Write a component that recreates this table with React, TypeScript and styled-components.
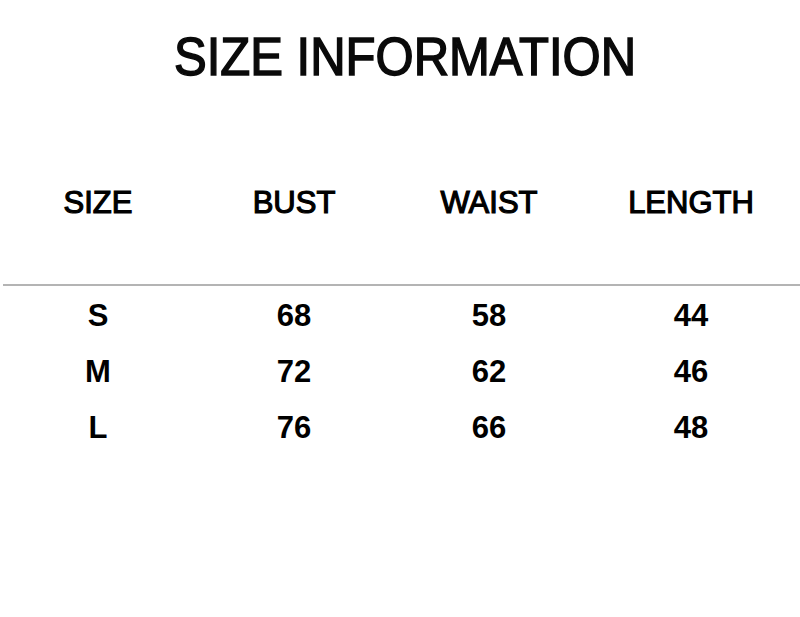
import styled, { createGlobalStyle } from 'styled-components'

const GlobalStyle = createGlobalStyle`
    html, body {
        margin: 0;
        padding: 0;
        background: #ffffff;
    }
    body {
        font-family: "Liberation Sans", Arial, sans-serif;
        color: #000000;
    }
`

const Page = styled.div`
    width: 800px;
    height: 617px;
    background: #ffffff;
    overflow: hidden;
`

const Title = styled.h1`
    margin: 0;
    padding-top: 29px;
    text-align: center;
    font-family: "Liberation Sans", Arial, sans-serif;
    font-size: 53px;
    font-weight: 400;
    line-height: 56px;
    color: #0a0a0a;
    -webkit-text-stroke: 1.5px #0a0a0a;
    transform: translateX(5px) scaleX(0.925);
`

const Spacer = styled.div<{ $h: number }>`
    height: ${p => p.$h}px;
`

const Row = styled.div<{ $height: number }>`
    display: grid;
    grid-template-columns: 196px 196px 194px 210px;
    height: ${p => p.$height}px;
    align-items: center;
`

const HeadCell = styled.div`
    text-align: center;
    font-family: "Liberation Sans", Arial, sans-serif;
    font-size: 31px;
    font-weight: 400;
    color: #000000;
    -webkit-text-stroke: 1.2px #000000;
`

const Divider = styled.hr`
    margin: 0 0 0 3px;
    border: none;
    height: 2px;
    background: #b4b4b4;
`

const Cell = styled.div`
    text-align: center;
    font-family: "Liberation Sans", Arial, sans-serif;
    font-size: 31px;
    font-weight: 700;
    color: #000000;
`

const headers = ['SIZE', 'BUST', 'WAIST', 'LENGTH']
const rows = [
    ['S', '68', '58', '44'],
    ['M', '72', '62', '46'],
    ['L', '76', '66', '48'],
]

export default function App() {
    return (
        <Page>
            <GlobalStyle />
            <Title>SIZE INFORMATION</Title>
            <Spacer $h={88} />
            <Row $height={60}>
                {headers.map(h => <HeadCell key={h}>{h}</HeadCell>)}
            </Row>
            <Spacer $h={51} />
            <Divider />
            <Spacer $h={2} />
            {rows.map(r => (
                <Row key={r[0]} $height={56}>
                    {r.map((v, i) => <Cell key={i}>{v}</Cell>)}
                </Row>
            ))}
        </Page>
    )
}
